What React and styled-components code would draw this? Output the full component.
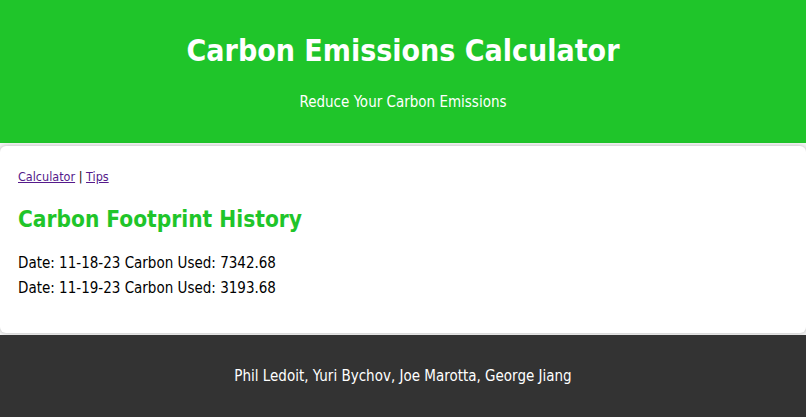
import React from "react"
import styled, { createGlobalStyle } from "styled-components"

const GlobalStyle = createGlobalStyle`
  body {
    margin: 0;
    background: #f4f4f4;
    font-family: Tahoma, "DejaVu Sans Condensed", "DejaVu Sans", sans-serif;
  }
`

const history = [
  { date: "11-18-23", used: "7342.68" },
  { date: "11-19-23", used: "3193.68" },
]

const App = () => {
  return (
    <>
      <GlobalStyle />
      <Header>
        <Title>Carbon Emissions Calculator</Title>
        <Subtitle>Reduce Your Carbon Emissions</Subtitle>
      </Header>
      <Card>
        <Nav>
          <NavLink href="#calculator">Calculator</NavLink> | <NavLink href="#tips">Tips</NavLink>
        </Nav>
        <Heading>Carbon Footprint History</Heading>
        {history.map(item => (
          <Entry key={item.date}>
            Date: {item.date} Carbon Used: {item.used}
          </Entry>
        ))}
      </Card>
      <Footer>
        <FooterText>Phil Ledoit, Yuri Bychov, Joe Marotta, George Jiang</FooterText>
      </Footer>
    </>
  )
}

export default App

const Header = styled.header`
  background-color: #1fc52a;
  color: white;
  text-align: center;
  height: 143px;
  box-sizing: border-box;
  padding-top: 32px;
`

const Title = styled.h1`
  margin: 0;
  font-size: 30px;
  line-height: 37px;
  font-weight: bold;
`

const Subtitle = styled.p`
  margin: 24px 0 0;
  font-size: 15px;
  line-height: 19px;
`

const Card = styled.main`
  background: white;
  margin: 3px 0 2px;
  border-radius: 6px;
  box-shadow: 0 0 4px rgba(0, 0, 0, 0.25);
  padding: 22px 18px 29px;
`

const Nav = styled.nav`
  font-size: 12.5px;
  line-height: 17px;
`

const NavLink = styled.a`
  color: #551a8b;
`

const Heading = styled.h2`
  color: #1fc52a;
  font-size: 22.5px;
  line-height: 28px;
  margin: 20px 0 21px;
`

const Entry = styled.p`
  margin: 0 0 6px;
  font-size: 15px;
  line-height: 19px;
  color: black;
`

const Footer = styled.footer`
  background-color: #333;
  color: white;
  text-align: center;
  height: 82px;
  display: flex;
  align-items: center;
  justify-content: center;
`

const FooterText = styled.p`
  margin: 0;
  font-size: 15px;
  line-height: 19px;
`
